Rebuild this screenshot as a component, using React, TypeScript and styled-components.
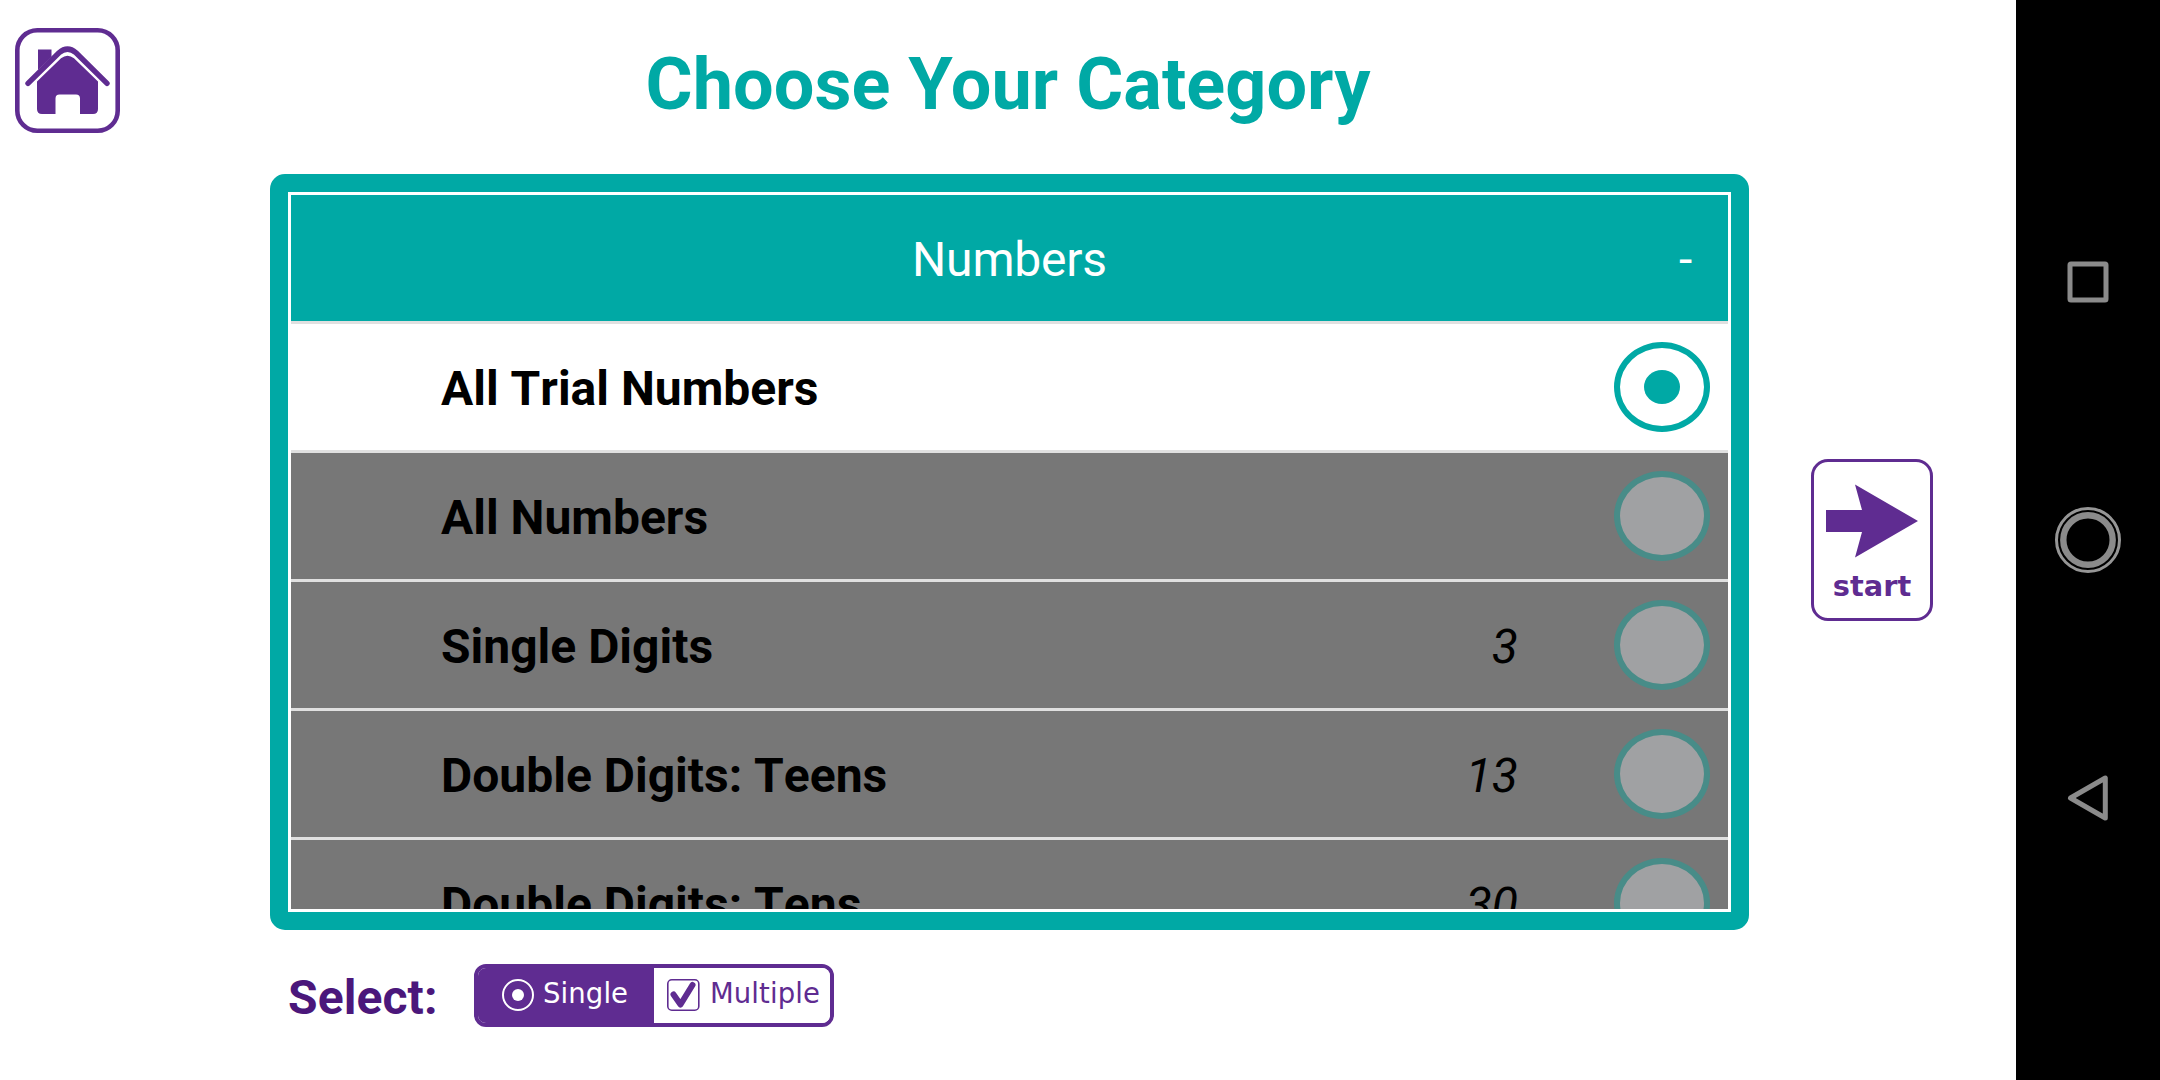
import React from 'react';
import styled, { createGlobalStyle } from 'styled-components';

const TEAL = '#00a9a5';
const PURPLE = '#5f2c91';

const GlobalStyle = createGlobalStyle`
  * { box-sizing: border-box; }
  body { margin: 0; background: #fff; font-family: Roboto, sans-serif; }
  button { border: 0; padding: 0; margin: 0; background: none; font: inherit; }
  svg { display: block; }
`;

const Screen = styled.div`
  display: flex;
  width: 2160px;
  height: 1080px;
  overflow: hidden;
`;

const Main = styled.main`
  display: grid;
  grid-template-columns: 270px 1479px 267px;
  grid-template-rows: 174px 756px 150px;
  width: 2016px;
`;

const HomeButton = styled.button`
  width: 105px;
  height: 105px;
  margin: 28px 0 0 15px;
`;

const Title = styled.h1`
  margin: 0;
  padding: 42px 3px 0 0;
  font-size: 72px;
  line-height: 86px;
  font-weight: 700;
  letter-spacing: 0.05px;
  text-align: center;
  color: ${TEAL};
`;

const Panel = styled.section`
  grid-column: 2;
  grid-row: 2;
  border: 18px solid ${TEAL};
  border-radius: 15px;
`;

const List = styled.div`
  height: 100%;
  border: 3px solid #fff;
  overflow: hidden;
`;

const ListHeader = styled.header`
  display: grid;
  grid-template-columns: 100px 1fr 100px;
  align-items: center;
  height: 126px;
  padding-top: 2px;
  background: ${TEAL};
  color: #fff;
  font-size: 48px;
  letter-spacing: -0.2px;
  text-align: center;
`;

const Collapse = styled.span`
  padding-right: 36px;
  text-align: right;
`;

const Row = styled.div<{ $selected?: boolean }>`
  display: flex;
  align-items: center;
  height: 129px;
  padding: 0 18px 0 150px;
  border-top: 3px solid #e0e0e0;
  background: ${p => (p.$selected ? '#fff' : '#777')};
  color: #000;
  font-size: 48px;
`;

const Label = styled.span`
  flex: 1;
  padding-top: 2px;
  font-weight: 700;
  font-kerning: none;
`;

const Count = styled.span`
  margin-right: 96px;
  padding-top: 2px;
  font-style: italic;
`;

const Radio = styled.span<{ $selected?: boolean }>`
  display: flex;
  align-items: center;
  justify-content: center;
  width: 96px;
  height: 90px;
  border: 6px solid ${p => (p.$selected ? TEAL : '#488c88')};
  border-radius: 50%;
  background: ${p => (p.$selected ? '#fff' : '#a0a1a3')};
`;

const RadioDot = styled.span`
  width: 36px;
  height: 34px;
  border-radius: 50%;
  background: ${TEAL};
`;

const StartButton = styled.button`
  grid-column: 3;
  grid-row: 2;
  display: flex;
  flex-direction: column;
  align-items: center;
  width: 122px;
  height: 162px;
  margin: 285px 0 0 62px;
  padding-top: 22px;
  border: 3.5px solid ${PURPLE};
  border-radius: 17px;
  color: ${PURPLE};
`;

const StartText = styled.span`
  margin-top: 10px;
  font: 700 28.8px/36px 'DejaVu Sans', Verdana, sans-serif;
`;

const Footer = styled.footer`
  grid-column: 2;
  grid-row: 3;
  display: flex;
  align-items: flex-start;
  padding: 34px 0 0 18px;
`;

const SelectLabel = styled.span`
  width: 186px;
  margin-top: 6px;
  font-size: 48px;
  line-height: 56px;
  font-weight: 700;
  letter-spacing: 0.1px;
  color: #4b177b;
`;

const Toggle = styled.div`
  display: flex;
  width: 360px;
  height: 63px;
  border: 4px solid ${PURPLE};
  border-radius: 12px;
  overflow: hidden;
`;

const Option = styled.button<{ $active?: boolean }>`
  display: flex;
  width: 176px;
  padding: ${p => (p.$active ? '11px 0 0 24px' : '11px 0 0 13px')};
  background: ${p => (p.$active ? PURPLE : '#fff')};
  color: ${p => (p.$active ? '#fff' : PURPLE)};
  gap: ${p => (p.$active ? '9px' : '10px')};
`;

const OptionText = styled.span`
  font: 400 27.5px/32px 'DejaVu Sans', Verdana, sans-serif;
  letter-spacing: 0.1px;
  margin-top: -2px;
  white-space: nowrap;
`;

const NavBar = styled.nav`
  display: flex;
  flex-direction: column;
  align-items: center;
  justify-content: center;
  gap: 186px;
  width: 144px;
  background: #000;
`;

const rows = [
  { label: 'All Trial Numbers', selected: true },
  { label: 'All Numbers' },
  { label: 'Single Digits', count: 3 },
  { label: 'Double Digits: Teens', count: 13 },
  { label: 'Double Digits: Tens', count: 30 },
];

const HomeIcon = () => (
  <svg width="105" height="105" viewBox="0 0 105 105" fill={PURPLE}>
    <rect x="2.3" y="2.3" width="100.4" height="100.4" rx="20" fill="#fff" stroke={PURPLE} strokeWidth="4.6" />
    <path d="M23 21.500H36.500V29L23 42Z" />
    <path d="M13 55.300L44 24.800Q52.500 17.500 61 24.800L92 55.300" fill="none" stroke={PURPLE} strokeWidth="5.400" strokeLinecap="round" />
    <path d="M22 53.500L46 30.300Q52.500 25 59 30.300L83 53.500V81Q83 86 78 86H65V70.500Q65 66.500 61 66.500H44.500Q40.500 66.500 40.500 70.500V86H27Q22 86 22 81Z" />
  </svg>
);

const ArrowIcon = () => (
  <svg width="92" height="74" viewBox="0 0 92 74" fill={PURPLE}>
    <path d="M0 26H36L29 .5L92 37L29 73.500L36 48H0Z" />
  </svg>
);

const RadioIcon = () => (
  <svg width="32" height="32" viewBox="0 0 32 32">
    <circle cx="16" cy="16" r="15" fill="none" stroke="currentColor" strokeWidth="2" />
    <circle cx="16" cy="16" r="6" fill="currentColor" />
  </svg>
);

const CheckIcon = () => (
  <svg width="33" height="32" viewBox="0 0 33 32">
    <rect x=".8" y=".8" width="31" height="30.400" rx="4" fill="none" stroke="currentColor" strokeWidth="1.600" />
    <path d="M6.500 15.500L13.500 25.500L25.500 6" fill="none" stroke="currentColor" strokeWidth="6" strokeLinecap="round" strokeLinejoin="round" />
  </svg>
);

const RecentsIcon = () => (
  <svg width="72" height="72" viewBox="0 0 72 72">
    <rect x="18" y="18" width="36" height="36" rx="1" fill="none" stroke="#8b8b8b" strokeWidth="5" />
  </svg>
);

const CircleIcon = () => (
  <svg width="72" height="72" viewBox="0 0 72 72" fill="none">
    <circle cx="36" cy="36" r="31.500" stroke="#969696" strokeWidth="3" />
    <circle cx="36" cy="36" r="24.700" stroke="#8b8b8b" strokeWidth="6.400" />
  </svg>
);

const BackIcon = () => (
  <svg width="72" height="72" viewBox="0 0 72 72">
    <path d="M18.500 36L53.300 16V56Z" fill="none" stroke="#8b8b8b" strokeWidth="5" strokeLinejoin="round" />
  </svg>
);

export default function App() {
  return (
    <>
      <GlobalStyle />
      <Screen>
        <Main>
          <HomeButton aria-label="Home"><HomeIcon /></HomeButton>
          <Title>Choose Your Category</Title>
          <Panel>
            <List>
              <ListHeader>
                <span />
                <span>Numbers</span>
                <Collapse>-</Collapse>
              </ListHeader>
              {rows.map(row => (
                <Row key={row.label} $selected={row.selected}>
                  <Label>{row.label}</Label>
                  {row.count !== undefined && <Count>{row.count}</Count>}
                  <Radio $selected={row.selected}>{row.selected && <RadioDot />}</Radio>
                </Row>
              ))}
            </List>
          </Panel>
          <StartButton>
            <ArrowIcon />
            <StartText>start</StartText>
          </StartButton>
          <Footer>
            <SelectLabel>Select:</SelectLabel>
            <Toggle>
              <Option $active><RadioIcon /><OptionText>Single</OptionText></Option>
              <Option><CheckIcon /><OptionText>Multiple</OptionText></Option>
            </Toggle>
          </Footer>
        </Main>
        <NavBar>
          <RecentsIcon />
          <CircleIcon />
          <BackIcon />
        </NavBar>
      </Screen>
    </>
  );
}
